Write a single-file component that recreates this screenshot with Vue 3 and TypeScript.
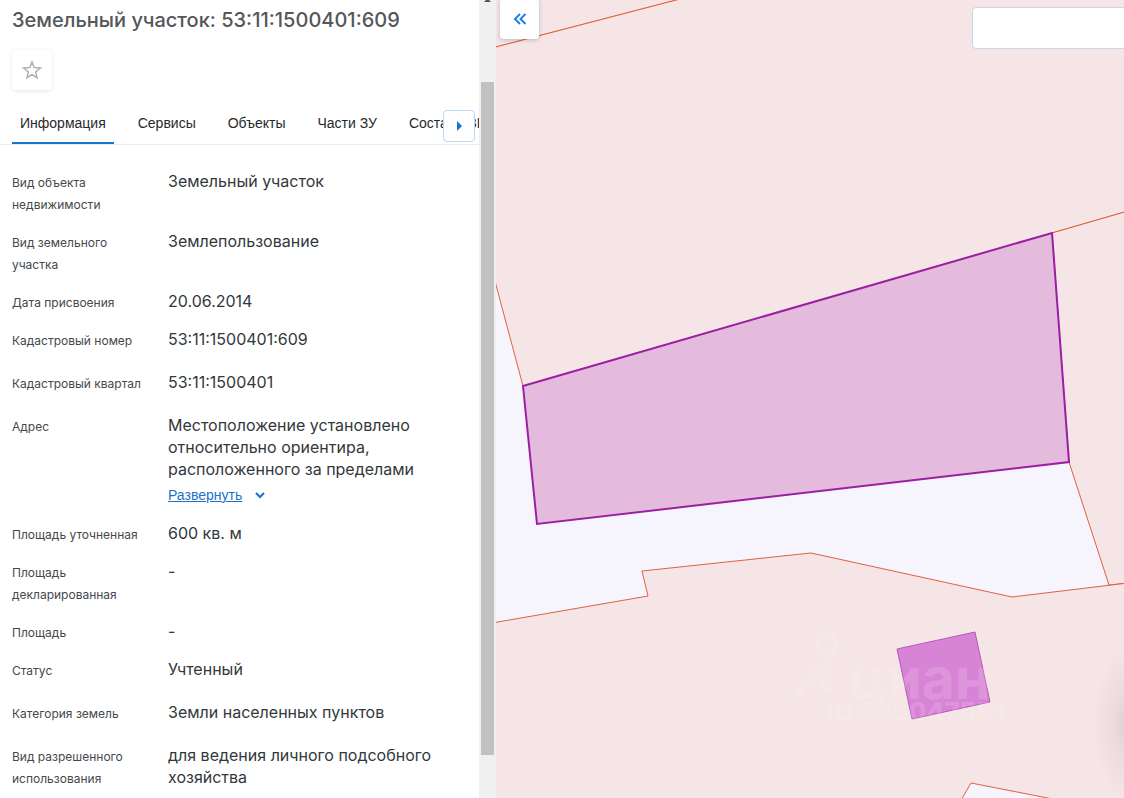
<script setup lang="ts">
import { ref } from 'vue'

interface Field {
  label: string
  value: string
  roomy?: boolean
  expandable?: boolean
}

const tabs: string[] = ['Информация', 'Сервисы', 'Объекты', 'Части ЗУ', 'Состав ЕЗП']
const activeTab = ref<string>('Информация')

const fields: Field[] = [
  { label: 'Вид объекта недвижимости', value: 'Земельный участок' },
  { label: 'Вид земельного участка', value: 'Землепользование' },
  { label: 'Дата присвоения', value: '20.06.2014' },
  { label: 'Кадастровый номер', value: '53:11:1500401:609', roomy: true },
  { label: 'Кадастровый квартал', value: '53:11:1500401', roomy: true },
  {
    label: 'Адрес',
    value: 'Местоположение установлено относительно ориентира, расположенного за пределами',
    expandable: true,
  },
  { label: 'Площадь уточненная', value: '600 кв. м' },
  { label: 'Площадь декларированная', value: '-' },
  { label: 'Площадь', value: '-' },
  { label: 'Статус', value: 'Учтенный', roomy: true },
  { label: 'Категория земель', value: 'Земли населенных пунктов', roomy: true },
  { label: 'Вид разрешенного использования', value: 'для ведения личного подсобного хозяйства' },
]
</script>

<template>
  <div class="app">
    <aside class="panel">
      <h1 class="title">Земельный участок: 53:11:1500401:609</h1>
      <button class="favorite" type="button" aria-label="В избранное">
        <svg viewBox="0 0 20 20" width="20" height="20">
          <path d="M10 2 12.2 7.6 18.3 8 13.6 11.9 15.1 17.8 10 14.5 4.9 17.8 6.4 11.9 1.700 8 7.800 7.600Z" />
        </svg>
      </button>

      <div class="tabs">
        <nav class="tab-list" role="tablist">
          <button
            v-for="tab in tabs"
            :key="tab"
            type="button"
            role="tab"
            class="tab"
            :class="{ active: tab === activeTab }"
            :aria-selected="tab === activeTab"
            @click="activeTab = tab"
          >{{ tab }}</button>
        </nav>
        <button class="tabs-next" type="button" aria-label="Следующие вкладки">
          <svg viewBox="0 0 6 10" width="6" height="10"><path d="M1 0 6 5 1 10Z" /></svg>
        </button>
      </div>

      <dl class="fields">
        <div v-for="field in fields" :key="field.label" class="field" :class="{ roomy: field.roomy }">
          <dt>{{ field.label }}</dt>
          <dd>
            {{ field.value }}
            <a v-if="field.expandable" class="expand" href="#">
              <span>Развернуть</span>
              <svg viewBox="0 0 12 8" width="12" height="8"><path d="M2 2 6 6 10 2" /></svg>
            </a>
          </dd>
        </div>
      </dl>
    </aside>

    <div class="scrollbar" aria-hidden="true">
      <svg class="scroll-up" viewBox="0 0 7 3" width="7" height="3"><path d="M2 0H5L7 2H0Z" /></svg>
      <div class="thumb"></div>
    </div>

    <main class="map">
      <svg class="parcels" viewBox="0 0 628 798" preserveAspectRatio="xMinYMin slice">
        <defs>
          <radialGradient id="haze">
            <stop offset="0" stop-color="#b9a9aa" stop-opacity=".5" />
            <stop offset=".5" stop-color="#b9a9aa" stop-opacity=".16" />
            <stop offset="1" stop-color="#b9a9aa" stop-opacity="0" />
          </radialGradient>
        </defs>
        <g class="land">
          <path d="M-4 48 188 -2H-4Z" />
          <path d="M-4 48 188 -2H632V211L556 233 27 386 -4 270Z" />
          <path d="M556 233 632 211V583L613 585 573 462Z" />
          <path d="M-4 623 152 596 146 571 315 553 516 597 632 583V802H572L475 783 464 802H-4Z" />
        </g>
        <path class="selected" d="M27 386 556 233 573 462 41 524Z" />
        <path class="building" d="M401 649 479 632 494 702 416 719Z" />
        <ellipse cx="640" cy="724" rx="44" ry="80" fill="url(#haze)" />
        <g class="watermark">
          <path d="M331 632a12 12 0 0 0-12 12c0 7 7 10 12 17 5-7 12-10 12-17a12 12 0 0 0-12-12Zm0 6a6 6 0 1 1 0 12 6 6 0 0 1 0-12Z" fill-rule="evenodd" />
          <path class="roof" d="M299 695 320 672 334 691M331 662V682" />
          <text class="brand" x="353" y="699">циан</text>
          <text class="number" x="330" y="721">ID 325047551</text>
        </g>
      </svg>
      <button class="collapse" type="button" aria-label="Свернуть панель">
        <svg viewBox="0 0 14 14" width="14" height="14"><path d="M7 2 2 7 7 12M12.500 2 7.500 7 12.500 12" /></svg>
      </button>
      <input class="search" type="text" aria-label="Поиск" />
    </main>
  </div>
</template>

<style>
body {
  margin: 0;
}
</style>

<style scoped>
.app {
  display: flex;
  height: 100vh;
  overflow: hidden;
  background: #fff;
  color: #33383b;
  font-family: Inter, "Liberation Sans", sans-serif;
}
button {
  padding: 0;
  border: 0;
  background: #fff;
  cursor: pointer;
}
.panel {
  flex: 0 0 479px;
  overflow: hidden;
}
.title {
  margin: 8px 12px 18px;
  font-size: 20px;
  line-height: 24px;
  font-weight: 500;
  color: #55575a;
}
.favorite {
  display: flex;
  align-items: center;
  justify-content: center;
  width: 40px;
  height: 40px;
  margin-left: 12px;
  border-radius: 4px;
  box-shadow: 0 1px 4px rgba(0, 0, 0, 0.1);
}
.favorite path {
  fill: none;
  stroke: #b0b0b0;
  stroke-width: 1.5;
}
.tabs {
  position: relative;
  margin-top: 12px;
  border-bottom: 1px solid #e8eaec;
}
.tab-list {
  display: flex;
  gap: 16px;
  padding-left: 12px;
  overflow: hidden;
}
.tab {
  flex: none;
  height: 42px;
  padding: 2px 8px 0;
  border-bottom: 2px solid transparent;
  font: 14px/20px "Liberation Sans", Arial, sans-serif;
  color: #26292b;
}
.tab.active {
  border-color: #1a73c9;
}
.tabs-next {
  position: absolute;
  top: 8px;
  right: 4px;
  display: flex;
  align-items: center;
  justify-content: center;
  width: 32px;
  height: 32px;
  border: 1px solid #bcd8f3;
  border-radius: 4px;
}
.tabs-next path {
  fill: #1a73c9;
}
.fields {
  margin: 25px 12px 0;
}
.field {
  display: grid;
  grid-template-columns: 132px 270px;
  column-gap: 24px;
  margin-bottom: 16px;
  line-height: 22px;
}
.field.roomy {
  margin-bottom: 21px;
}
dt {
  padding-top: 2px;
  margin-bottom: -2px;
  font-size: 12px;
  color: #45494c;
}
dd {
  margin: 0;
  font-size: 16px;
}
.expand {
  display: flex;
  align-items: center;
  gap: 12px;
  padding-top: 4px;
  height: 22px;
  font: 14px/20px "Liberation Sans", Arial, sans-serif;
  color: #1a73c9;
  text-decoration: none;
}
.expand span {
  text-decoration: underline;
}
.expand path {
  fill: none;
  stroke: #1a73c9;
  stroke-width: 2;
}
.scrollbar {
  flex: 0 0 17px;
  background: #f0f0f0;
}
.scroll-up {
  display: block;
  margin: 0 auto;
  fill: #505050;
}
.thumb {
  height: calc(100vh - 125px);
  margin: 79px 2px 0;
  background: #c1c1c1;
}
.map {
  position: relative;
  flex: 1;
  min-width: 0;
  overflow: hidden;
  background: #f6f5fd;
}
.parcels {
  display: block;
  width: 100%;
  height: 100%;
}
.land path {
  fill: #f5e5e6;
  stroke: #e0613f;
  stroke-width: 1;
}
.selected {
  fill: #e4bbdd;
  stroke: #9c1fa3;
  stroke-width: 2;
}
.building {
  fill: #d884d6;
  stroke: #b45bb9;
  stroke-width: 1;
}
.watermark {
  fill: #fff;
  opacity: 0.13;
}
.roof {
  fill: none;
  stroke: #fff;
  stroke-width: 8;
}
.brand {
  font: 700 57px Inter, sans-serif;
}
.number {
  font: 800 26px Inter, sans-serif;
}
.collapse {
  position: absolute;
  top: -1px;
  left: 4px;
  display: flex;
  align-items: center;
  justify-content: center;
  width: 39px;
  height: 40px;
  border-radius: 4px;
  box-shadow: 0 1px 4px rgba(60, 80, 120, 0.3);
}
.collapse path {
  fill: none;
  stroke: #1f7fe5;
  stroke-width: 2;
}
.search {
  position: absolute;
  top: 7px;
  right: -8px;
  box-sizing: border-box;
  width: 160px;
  height: 42px;
  padding: 0 12px;
  border: 1px solid #ccd5e8;
  border-radius: 4px;
  background: #fff;
  font: 14px Inter, sans-serif;
}
</style>
